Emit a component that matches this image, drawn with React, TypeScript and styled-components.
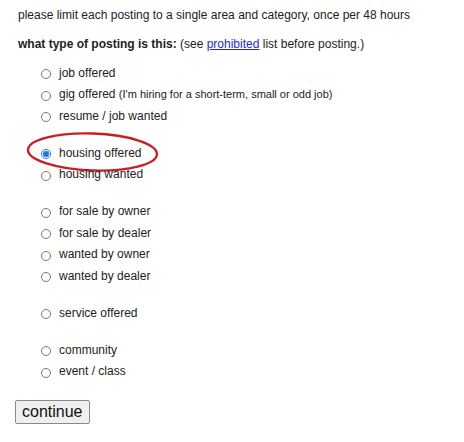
import React from "react";
import styled, { createGlobalStyle } from "styled-components";

const Global = createGlobalStyle`
  html, body { margin: 0; padding: 0; background: #ffffff; }
  body { font-family: "Liberation Sans", Arial, sans-serif; color: #222222; }
`;

const Page = styled.div`
  padding: 7px 0 0 18px;
  width: 446px;
  height: 435px;
  font-size: 12px;
`;

const Notice = styled.p`
  margin: 0;
  line-height: 16px;
`;

const Question = styled.p`
  margin: 13px 0 0 0;
  line-height: 16px;
`;

const Label = styled.b`
  font-weight: bold;
`;

const Link = styled.a`
  color: #2a2ac0;
  text-decoration: underline;
`;

const List = styled.div`
  margin-top: 10px;
  padding-left: 23px;
  display: flex;
  flex-direction: column;
  gap: 15.5px;
`;

const Group = styled.div`
  display: flex;
  flex-direction: column;
`;

const Row = styled.label`
  position: relative;
  display: flex;
  align-items: center;
  height: 21.5px;
  gap: 8px;
`;

const Radio = styled.input.attrs({ type: "radio" })`
  margin: 3px 0 0 0;
  width: 10px;
  height: 10px;
  accent-color: #1a73e8;
`;

const Text = styled.span`
  line-height: 16px;
`;

const Note = styled.span`
  font-size: 11px;
`;

const Ellipse = styled.svg`
  position: absolute;
  left: -16px;
  top: -10px;
  width: 136px;
  height: 42px;
  overflow: visible;
  pointer-events: none;
`;

const Continue = styled.button`
  margin-top: 18px;
  margin-left: -3px;
  font-family: "Liberation Sans", Arial, sans-serif;
  font-size: 16px;
  color: #111;
  background: #efefef;
  border: 1px solid #8a8a8a;
  border-radius: 2px;
  padding: 1px 6px;
  height: 24px;
  line-height: 20px;
`;

const groups: { value: string; label: string; note?: string }[][] = [
  [
    { value: "jo", label: "job offered" },
    { value: "go", label: "gig offered", note: "(I'm hiring for a short-term, small or odd job)" },
    { value: "jw", label: "resume / job wanted" },
  ],
  [
    { value: "ho", label: "housing offered" },
    { value: "hw", label: "housing wanted" },
  ],
  [
    { value: "fso", label: "for sale by owner" },
    { value: "fsd", label: "for sale by dealer" },
    { value: "wo", label: "wanted by owner" },
    { value: "wd", label: "wanted by dealer" },
  ],
  [{ value: "so", label: "service offered" }],
  [
    { value: "c", label: "community" },
    { value: "e", label: "event / class" },
  ],
];

export default function App() {
  return (
    <>
      <Global />
      <Page>
        <Notice>please limit each posting to a single area and category, once per 48 hours</Notice>
        <Question>
          <Label>what type of posting is this:</Label> (see <Link href="#">prohibited</Link> list before posting.)
        </Question>
        <List>
          {groups.map((g, i) => (
            <Group key={i}>
              {g.map((item) => (
                <Row key={item.value}>
                  <Radio name="id" value={item.value} defaultChecked={item.value === "ho"} />
                  <Text>
                    {item.label}
                    {item.note && <> <Note>{item.note}</Note></>}
                  </Text>
                  {item.value === "ho" && (
                    <Ellipse viewBox="0 0 136 42">
                      <ellipse
                        cx="67.5"
                        cy="20"
                        rx="64.5"
                        ry="18.5"
                        fill="none"
                        stroke="#c42127"
                        strokeWidth="2.4"
                        transform="rotate(2 67.5 20)"
                      />
                    </Ellipse>
                  )}
                </Row>
              ))}
            </Group>
          ))}
        </List>
        <Continue type="button">continue</Continue>
      </Page>
    </>
  );
}
